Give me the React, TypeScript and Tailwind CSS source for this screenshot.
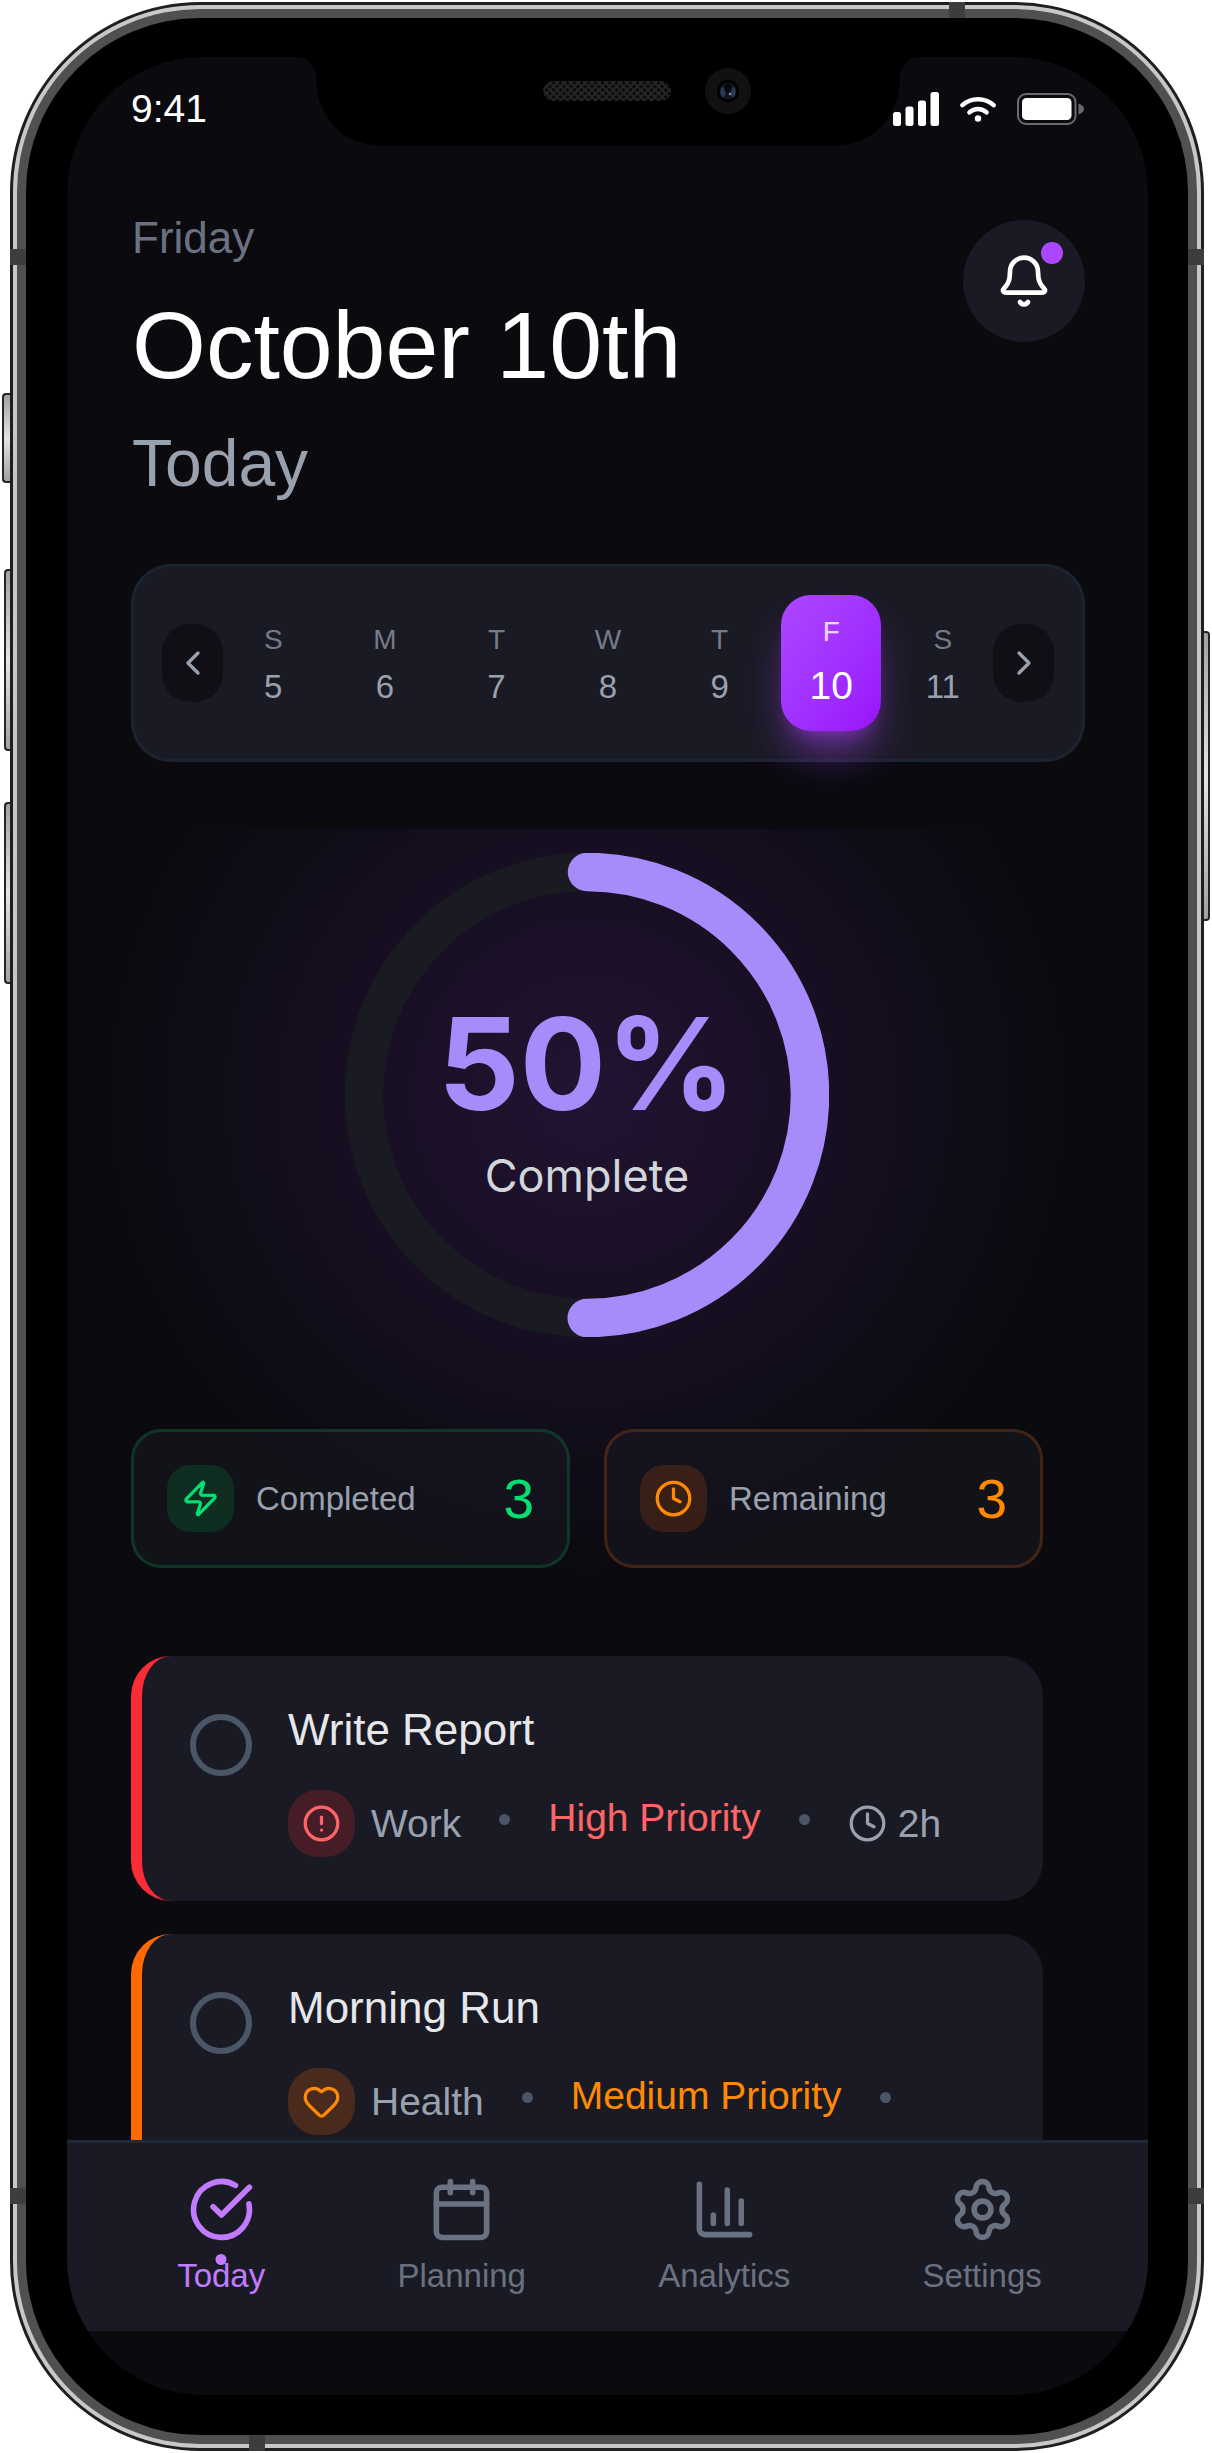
import { useState } from "react";
import {
  Bell,
  Calendar,
  ChartColumn,
  ChevronLeft,
  ChevronRight,
  CircleAlert,
  CircleCheckBig,
  Clock,
  Heart,
  Settings,
  Zap,
} from "lucide-react";

const week = [
  { letter: "S", date: 5 },
  { letter: "M", date: 6 },
  { letter: "T", date: 7 },
  { letter: "W", date: 8 },
  { letter: "T", date: 9 },
  { letter: "F", date: 10 },
  { letter: "S", date: 11 },
];

const tabs = [
  { name: "Today", Icon: CircleCheckBig },
  { name: "Planning", Icon: Calendar },
  { name: "Analytics", Icon: ChartColumn },
  { name: "Settings", Icon: Settings },
];

function StatusIcons() {
  return (
    <div className="flex items-center gap-[21px]">
      <svg width="46" height="34" viewBox="0 0 46 34" fill="#fff" aria-hidden="true">
        <rect x="0" y="20" width="8" height="14" rx="2.5" />
        <rect x="12.5" y="14.5" width="8" height="19.5" rx="2.5" />
        <rect x="25" y="8.5" width="8" height="25.5" rx="2.5" />
        <rect x="37.5" y="0" width="8.5" height="34" rx="2.5" />
      </svg>
      <svg width="36" height="26" viewBox="0 0 36 26" fill="none" stroke="#fff" strokeWidth="4.4" strokeLinecap="round" aria-hidden="true">
        <path d="M2.4 9.2C11 1.2 25 1.2 33.600 9.200" />
        <path d="M9.400 16.400c5-4.600 12.200-4.600 17.200 0" />
        <circle cx="18" cy="22.500" r="3.200" fill="#fff" stroke="none" />
      </svg>
      <svg width="68" height="32" viewBox="0 0 68 32" fill="none" aria-hidden="true">
        <rect x="1" y="1" width="57.500" height="30" rx="8" stroke="#6b6b6e" strokeWidth="2" />
        <rect x="5" y="5" width="49.500" height="22" rx="4.500" fill="#fff" />
        <path d="M61.500 10.500c4 1.500 5.500 3.500 5.500 5.500s-1.500 4-5.500 5.500z" fill="#6b6b6e" />
      </svg>
    </div>
  );
}

function Notch() {
  return (
    <svg className="absolute top-[-2px] left-1/2 -translate-x-1/2" width="634" height="94" viewBox="0 0 634 94" aria-hidden="true">
      <defs>
        <pattern id="mesh" width="7" height="7" patternUnits="userSpaceOnUse">
          <rect width="7" height="7" fill="#0c0c0c" />
          <path d="M0 0l7 7M7 0l-7 7" stroke="#262626" strokeWidth="1.600" />
        </pattern>
      </defs>
      <path
        d="M0 0H634V2C617 2 611 7 609 22C608 36 607 46 602 54C591 77 572 91 538 91H96C62 91 43 77 32 54C27 46 26 36 25 22C23 7 17 2 0 2Z"
        fill="#000"
      />
      <rect x="252" y="26" width="128" height="20" rx="10" fill="url(#mesh)" />
      <circle cx="437" cy="36" r="23" fill="#111" />
      <circle cx="437" cy="36" r="11" fill="#000" />
      <circle cx="437" cy="36" r="8.500" fill="#10141d" />
      <ellipse cx="432" cy="37" rx="2.500" ry="5" fill="#2a3a56" />
      <ellipse cx="442" cy="37" rx="2.500" ry="5" fill="#2a3a56" />
      <circle cx="437" cy="33" r="4" fill="#08090c" />
      <circle cx="439" cy="39" r="1.200" fill="#8092b0" />
    </svg>
  );
}

function ProgressRing({ percent }: { percent: number }) {
  const radius = 223;
  const length = 2 * Math.PI * radius;
  return (
    <div className="relative mx-auto w-fit">
      <svg width="484" height="484" viewBox="0 0 484 484" fill="none" strokeWidth="38.500" aria-hidden="true">
        <circle cx="242" cy="242" r={radius} stroke="#1a1a22" />
        <circle
          cx="242"
          cy="242"
          r={radius}
          stroke="#a78bfa"
          strokeLinecap="round"
          strokeDasharray={`${(length * percent) / 100} ${length}`}
          transform="rotate(-90 242 242)"
        />
      </svg>
      <div className="absolute inset-0 flex flex-col items-center justify-center gap-3 pt-4 font-['Inter',sans-serif]">
        <span className="text-[128px] leading-[134px] font-bold text-[#a78bfa]">{percent}%</span>
        <span className="text-[45px] leading-[66px] text-gray-300">Complete</span>
      </div>
    </div>
  );
}

function Dot() {
  return (
    <span className="pb-[9px]">
      <span className="block size-[11px] rounded-full bg-gray-600" />
    </span>
  );
}

type TaskProps = {
  title: string;
  category: string;
  priority: string;
  duration?: string;
  edge: string;
  badge: string;
  accent: string;
  Icon: typeof Heart;
};

function Task({ title, category, priority, duration, edge, badge, accent, Icon }: TaskProps) {
  const [done, setDone] = useState(false);
  return (
    <li className={`flex items-start gap-9 rounded-[40px] border-l-[11px] bg-[#1a1a24] py-[44px] pr-[44px] pl-12 ${edge}`}>
      <input
        type="checkbox"
        aria-label={title}
        checked={done}
        onChange={() => setDone(!done)}
        className="mt-[14px] size-[62px] shrink-0 appearance-none rounded-full border-[6px] border-gray-600 checked:bg-gray-600"
      />
      <div className="flex min-w-0 flex-col gap-[30px]">
        <h3 className="text-[44px] leading-[60px] text-gray-200">{title}</h3>
        <div className="flex flex-wrap items-center gap-x-[38px] text-[39px] leading-[56px] text-gray-400">
          <span className="flex items-center gap-4">
            <span className={`flex size-[67px] items-center justify-center rounded-[30px] ${badge}`}>
              <Icon size={39} />
            </span>
            {category}
          </span>
          <Dot />
          <span className={`pb-[11px] ${accent}`}>{priority}</span>
          <Dot />
          {duration && (
            <span className="flex items-center gap-[11px]">
              <Clock size={39} />
              {duration}
            </span>
          )}
        </div>
      </div>
    </li>
  );
}

type StatProps = { label: string; value: number; box: string; badge: string; tint: string; Icon: typeof Zap };

function Stat({ label, value, box, badge, tint, Icon }: StatProps) {
  return (
    <div className={`flex flex-1 items-center rounded-[30px] border-[3px] bg-[#1a1a24]/50 p-[33px] ${box}`}>
      <span className={`flex size-[67px] items-center justify-center rounded-3xl ${badge} ${tint}`}>
        <Icon size={39} />
      </span>
      <span className="ml-[22px] text-[33px] leading-[44px] text-gray-400">{label}</span>
      <span className={`ml-auto text-[55px] leading-[66px] ${tint}`}>{value}</span>
    </div>
  );
}

function FrameDetails() {
  return (
    <div aria-hidden="true">
      <span className="absolute top-[391px] -left-2 h-[90px] w-2 rounded-l-sm border-2 border-r-0 border-neutral-800 bg-linear-to-b from-neutral-400 via-neutral-200 to-neutral-400" />
      <span className="absolute top-[567px] -left-1.5 h-[182px] w-1.5 rounded-l-sm border-2 border-r-0 border-neutral-800 bg-linear-to-b from-neutral-400 via-neutral-200 to-neutral-400" />
      <span className="absolute top-[800px] -left-1.5 h-[182px] w-1.5 rounded-l-sm border-2 border-r-0 border-neutral-800 bg-linear-to-b from-neutral-400 via-neutral-200 to-neutral-400" />
      <span className="absolute top-[629px] -right-1.5 h-[290px] w-1.5 rounded-r-sm border-2 border-l-0 border-neutral-800 bg-linear-to-b from-neutral-400 via-neutral-200 to-neutral-400" />
      <span className="absolute top-[247px] left-0 h-4 w-4 bg-[#3d3d3d]" />
      <span className="absolute top-[247px] right-0 h-4 w-4 bg-[#3d3d3d]" />
      <span className="absolute bottom-[247px] left-0 h-4 w-4 bg-[#3d3d3d]" />
      <span className="absolute right-0 bottom-[247px] h-4 w-4 bg-[#3d3d3d]" />
      <span className="absolute top-0 right-[239px] h-4 w-4 bg-[#3d3d3d]" />
      <span className="absolute bottom-0 left-[239px] h-4 w-4 bg-[#3d3d3d]" />
    </div>
  );
}

export default function App() {
  const [selected, setSelected] = useState(10);
  const [tab, setTab] = useState("Today");

  return (
    <div className="flex h-screen min-h-[1700px] flex-col bg-white py-0.5 pr-2 pl-2.5 font-['Liberation_Sans',Arial,sans-serif]">
      <div className="relative flex min-h-0 flex-1 flex-col rounded-[190px] bg-[#1f1f1f] p-[3px]">
        <div className="flex min-h-0 flex-1 flex-col rounded-[187px] bg-[#c8c8c8] p-1">
          <div className="flex min-h-0 flex-1 flex-col rounded-[183px] bg-[#505050] p-[9px]">
            <div className="flex min-h-0 flex-1 flex-col rounded-[174px] bg-black pt-[39px] pr-10 pb-10 pl-[41px]">
              <div className="relative flex min-h-0 flex-1 flex-col overflow-hidden rounded-[136px] bg-[#0a0a0f]">
                <Notch />

                <div className="flex h-[104px] shrink-0 items-center justify-between pr-[63px] pl-16">
                  <span className="text-[39px] text-white">9:41</span>
                  <StatusIcons />
                </div>

                <header className="flex items-start justify-between pt-[49px] pr-[63px] pl-[65px]">
                  <div>
                    <p className="text-[44px] leading-[56px] text-gray-500">Friday</p>
                    <h1 className="mt-6 text-[95px] leading-[110px] text-white">October 10th</h1>
                    <p className="mt-[18px] text-[66px] leading-[90px] text-gray-400">Today</p>
                  </div>
                  <button
                    type="button"
                    aria-label="Notifications"
                    className="relative mt-2.5 flex size-[122px] items-center justify-center rounded-full bg-[#1a1a24] text-white"
                  >
                    <Bell size={56} />
                    <span className="absolute top-[22px] right-[22px] size-[22px] rounded-full bg-purple-500" />
                  </button>
                </header>

                <section
                  aria-label="Week"
                  className="mt-14 mr-[63px] ml-16 flex items-center rounded-[40px] border-[3px] border-gray-800/60 bg-[#1a1a24] p-7"
                >
                  <button
                    type="button"
                    aria-label="Previous week"
                    className="flex h-[78px] w-[61px] items-center justify-center rounded-[28px] bg-[#0f0f15] text-gray-400"
                  >
                    <ChevronLeft size={40} />
                  </button>
                  <div className="flex flex-1 gap-[11px]">
                    {week.map((day) => {
                      const active = day.date === selected;
                      return (
                        <button
                          key={day.date}
                          type="button"
                          aria-pressed={active}
                          onClick={() => setSelected(day.date)}
                          className={`flex h-[136px] flex-1 flex-col items-center justify-center rounded-[30px] ${
                            active
                              ? "gap-1 bg-linear-to-br from-purple-500 to-purple-600 shadow-[0_28px_42px_-8px_rgba(173,70,255,0.5),0_11px_17px_-11px_rgba(173,70,255,0.5)]"
                              : "gap-px pt-1"
                          }`}
                        >
                          <span className={`text-[28px] leading-[42px] ${active ? "text-white/80" : "text-[#767b88]"}`}>
                            {day.letter}
                          </span>
                          <span
                            className={
                              active ? "text-[39px] leading-[58px] text-white" : "text-[33px] leading-[50px] text-gray-400"
                            }
                          >
                            {day.date}
                          </span>
                        </button>
                      );
                    })}
                  </div>
                  <button
                    type="button"
                    aria-label="Next week"
                    className="flex h-[78px] w-[61px] items-center justify-center rounded-[28px] bg-[#0f0f15] text-gray-400"
                  >
                    <ChevronRight size={40} />
                  </button>
                </section>

                <main className="mt-[67px] min-h-0 flex-1 overflow-hidden">
                  <div className="bg-[radial-gradient(circle_480px_at_48.2%_266px,rgba(173,70,255,0.15)_0%,rgba(173,70,255,0.08)_50%,rgba(173,70,255,0)_100%)] pt-6 pr-[105px] pl-16">
                    <ProgressRing percent={50} />

                    <div className="mt-[92px] flex gap-[34px]">
                      <Stat
                        label="Completed"
                        value={3}
                        box="border-green-500/20"
                        badge="bg-green-500/15"
                        tint="text-green-400"
                        Icon={Zap}
                      />
                      <Stat
                        label="Remaining"
                        value={3}
                        box="border-orange-500/20"
                        badge="bg-orange-500/15"
                        tint="text-orange-400"
                        Icon={Clock}
                      />
                    </div>

                    <ul className="mt-[88px] flex flex-col gap-[33px]">
                      <Task
                        title="Write Report"
                        category="Work"
                        priority="High Priority"
                        duration="2h"
                        edge="border-red-500"
                        badge="bg-red-500/20 text-red-400"
                        accent="text-red-400"
                        Icon={CircleAlert}
                      />
                      <Task
                        title="Morning Run"
                        category="Health"
                        priority="Medium Priority"
                        edge="border-orange-500"
                        badge="bg-orange-500/20 text-orange-400"
                        accent="text-orange-400"
                        Icon={Heart}
                      />
                    </ul>
                  </div>
                </main>

                <nav
                  aria-label="Main"
                  className="mb-16 flex shrink-0 justify-around border-t-[3px] border-gray-800 bg-[#1a1a24] py-[33px] pr-10 pl-11"
                >
                  {tabs.map(({ name, Icon }) => (
                    <button
                      key={name}
                      type="button"
                      onClick={() => setTab(name)}
                      aria-current={tab === name ? "page" : undefined}
                      className={`relative flex flex-col items-center gap-[11px] ${
                        tab === name ? "text-purple-400" : "text-gray-500"
                      }`}
                    >
                      <Icon size={67} />
                      <span className="text-[33px] leading-[44px]">{name}</span>
                      {tab === name && (
                        <span className="absolute top-[78px] left-1/2 size-[11px] -translate-x-1/2 rounded-full bg-purple-400" />
                      )}
                    </button>
                  ))}
                </nav>
              </div>
            </div>
          </div>
        </div>
        <FrameDetails />
      </div>
    </div>
  );
}
